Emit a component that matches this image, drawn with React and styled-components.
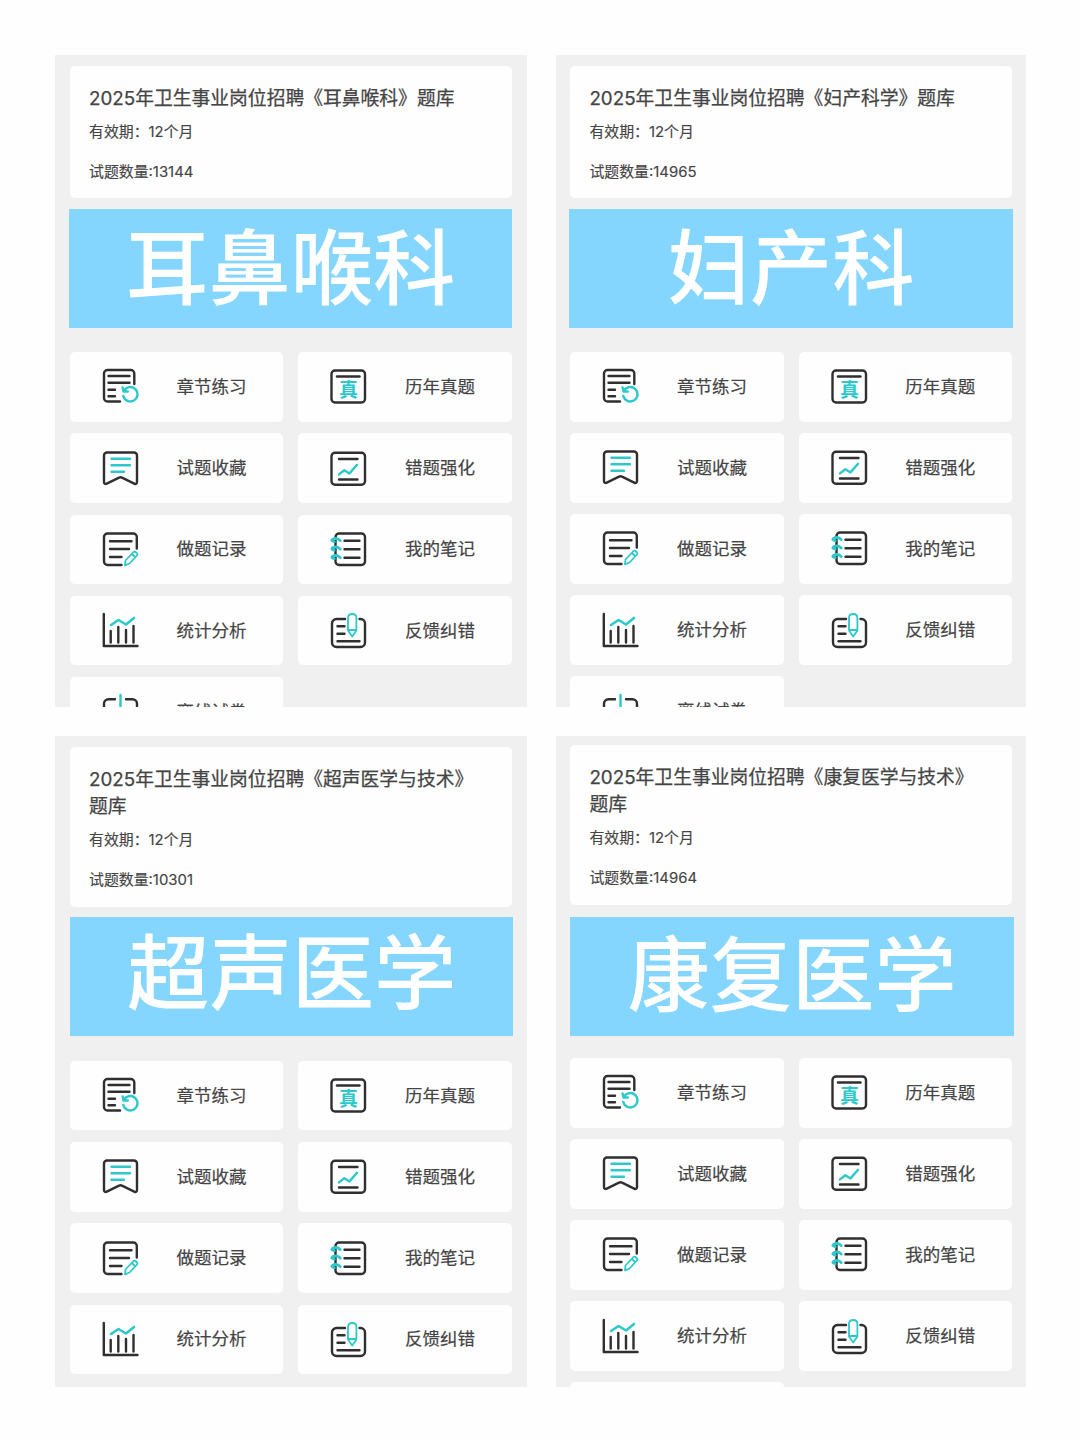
import React from 'react';
import styled, { createGlobalStyle } from 'styled-components';

const colors = {
  page: '#fefefe',
  panel: '#f0f0f0',
  card: '#fefefe',
  banner: '#84d6ff',
  text: '#444444',
  ink: '#2f2f2f',
  teal: '#2cc8cc',
};

const GlobalStyle = createGlobalStyle`
  body {
    margin: 0;
    background-color: ${colors.page};
    font-family: Inter, "Noto Sans CJK SC", sans-serif;
    color: ${colors.text};
  }
`;

const Page = styled.main`
  box-sizing: border-box;
  width: 1080px;
  height: 1440px;
  padding: 55px;
  display: grid;
  grid-template-columns: 472px 470px;
  grid-template-rows: 652px 651px;
  gap: 29px;
  overflow: hidden;
`;

const Panel = styled.section`
  box-sizing: border-box;
  display: flex;
  flex-direction: column;
  min-width: 0;
  overflow: hidden;
  padding: ${({ $top }) => $top}px ${({ $side }) => $side}px 0;
  background-color: ${colors.panel};
`;

const InfoCard = styled.header`
  box-sizing: border-box;
  flex: none;
  height: ${({ $height }) => $height}px;
  padding: 20px 19px 0;
  border-radius: 5px;
  background-color: ${colors.card};
`;

const Title = styled.h1`
  margin: 0;
  width: 396px;
  font-size: 18.8px;
  font-weight: 400;
  line-height: 26.5px;
  -webkit-text-stroke: 0.25px ${colors.text};
`;

const Meta = styled.p`
  margin: ${({ $gap }) => $gap}px 0 0;
  font-size: 14.9px;
  line-height: 20px;
  -webkit-text-stroke: 0.15px ${colors.text};
`;

const Banner = styled.div`
  display: flex;
  flex: none;
  align-items: center;
  justify-content: center;
  box-sizing: border-box;
  width: 443.4px;
  height: 119px;
  margin-top: ${({ $gap }) => $gap}px;
  margin-left: ${({ $shift }) => $shift}px;
  padding-bottom: ${({ $lift }) => $lift}px;
  background-color: ${colors.banner};
  color: #ffffff;
  font-family: "Noto Sans CJK SC", sans-serif;
  font-size: 82.3px;
  font-weight: 500;
  line-height: 1;
  white-space: nowrap;
`;

const Menu = styled.nav`
  display: grid;
  flex: none;
  grid-template-columns: 213.4px 213.4px;
  grid-auto-rows: 69.5px;
  column-gap: 15px;
  row-gap: ${({ $rowGap }) => $rowGap}px;
  margin-top: ${({ $gap }) => $gap}px;
`;

const MenuItem = styled.div`
  display: flex;
  align-items: center;
  padding-left: 32px;
  border-radius: 5px;
  background-color: ${colors.card};
`;

const MenuLabel = styled.span`
  margin-left: 37.5px;
  font-size: 17.5px;
  line-height: 24px;
  -webkit-text-stroke: 0.2px ${colors.text};
`;

const Icon = styled.svg`
  flex: none;
  width: 37px;
  height: 37px;
  fill: none;
  stroke: ${colors.ink};
  stroke-width: 2.4;
  stroke-linecap: round;
  stroke-linejoin: round;
`;

const Accent = styled.g`
  stroke: ${colors.teal};
`;

const Glyph = styled.text`
  fill: ${colors.teal};
  stroke: none;
  font-family: "Noto Sans CJK SC", sans-serif;
  font-size: 19px;
  font-weight: 700;
`;

const icons = {
  chapter: (
    <>
      <path d="M32.3 16V5.500a3.500 3.500 0 0 0-3.500-3.500H5.500A3.500 3.500 0 0 0 2 5.500V30a3.500 3.500 0 0 0 3.500 3.500H18" />
      <path d="M6.500 8H27.500M6.500 14.800H27.500M6.500 21.800H13M6.500 28.200H13" />
      <Accent>
        <path d="M22 22.700A7.200 7.200 0 1 1 21.300 28M20.600 19.500L21.500 23.500L25.800 23.500" />
      </Accent>
    </>
  ),
  past: (
    <>
      <rect x="1.500" y="2.500" width="33.500" height="32" rx="3.500" />
      <path d="M7 8.500H29.500" />
      <Glyph x="8.900" y="28.800">真</Glyph>
    </>
  ),
  favorite: (
    <>
      <path d="M5 2.500H32a3 3 0 0 1 3 3V32c0 1.900-1.200 2.400-2.800 1.600L20 27.700Q18.500 26.800 17 27.700L4.800 33.600C3.200 34.400 2 33.900 2 32V5.500a3 3 0 0 1 3-3Z" />
      <Accent>
        <path d="M9.500 8.800H28M9.500 15.300H28M9.500 21.800H22" />
      </Accent>
    </>
  ),
  mistakes: (
    <>
      <rect x="1.500" y="2.700" width="33.500" height="32" rx="3.500" />
      <path d="M9 9H27.500M9 29.500H27.500" />
      <Accent>
        <path d="M9 24.400L14.300 20.200L19.500 23.400L27 14.800" />
      </Accent>
    </>
  ),
  records: (
    <>
      <path d="M34.800 17.500V6a3.500 3.500 0 0 0-3.500-3.500H5.500A3.500 3.500 0 0 0 2 6V30.500a3.500 3.500 0 0 0 3.500 3.500H19.500" />
      <path d="M8 10.300H29.500M8 18H27M8 26H19.500" />
      <Accent strokeWidth="1.800">
        <path d="M23 34.300L23.500 29.500L31.500 21Q32.500 20.200 33.500 21L35 22.500Q35.800 23.500 35 24.500L27.500 32.500Z M30 23L33 26" />
      </Accent>
    </>
  ),
  notes: (
    <>
      <rect x="5.500" y="2.500" width="29.500" height="31.500" rx="3.500" />
      <path d="M14.500 9.800H29.500M14.500 18.300H29.500M14.500 26.800H29.500" />
      <Accent strokeWidth="2.800">
        <path d="M10.300 9.600Q8.500 7.300 5.500 7.300Q2.600 7.500 1.800 9.500L4.300 10.800" />
        <path d="M10.300 18.100Q8.500 15.800 5.500 15.800Q2.600 16 1.800 18L4.300 19.300" />
        <path d="M10.300 26.600Q8.500 24.300 5.500 24.300Q2.600 24.500 1.800 26.500L4.300 27.800" />
      </Accent>
    </>
  ),
  stats: (
    <>
      <path d="M1.800 2V34H35.500M8.700 19V30.500M16.300 15V30.500M24 18V30.500M31.500 14V30.500" />
      <Accent strokeWidth="2.600">
        <path d="M9 13L16.500 8L24 12.500L32 6" />
      </Accent>
    </>
  ),
  feedback: (
    <>
      <path d="M15 7H6.500A4.500 4.500 0 0 0 2 11.500V30.500a4.500 4.500 0 0 0 4.500 4.500H30.500A4.500 4.500 0 0 0 35 30.500V11.500A4.500 4.500 0 0 0 30.500 7H29.500" />
      <path d="M7.500 14.200H14.500M7.500 21.700H14.500M7.500 29.200H29.500" />
      <Accent strokeWidth="1.800">
        <path d="M18 6Q18 2 22.200 2Q26.400 2 26.400 6V18.500L22.200 24.500L18 18.500ZM18.500 18H26" />
      </Accent>
    </>
  ),
  offline: (
    <>
      <path d="M13 6.200H6.500A4.500 4.500 0 0 0 2 10.700V30a4 4 0 0 0 4 4H31a4 4 0 0 0 4-4V10.700A4.500 4.500 0 0 0 30.500 6.200H24" />
      <Accent>
        <path d="M18.500 2V21M13 16L18.500 21.500L24 16" />
      </Accent>
    </>
  ),
};

const menuEntries = [
  { icon: 'chapter', label: '章节练习' },
  { icon: 'past', label: '历年真题' },
  { icon: 'favorite', label: '试题收藏' },
  { icon: 'mistakes', label: '错题强化' },
  { icon: 'records', label: '做题记录' },
  { icon: 'notes', label: '我的笔记' },
  { icon: 'stats', label: '统计分析' },
  { icon: 'feedback', label: '反馈纠错' },
  { icon: 'offline', label: '离线试卷' },
];

const banks = [
  {
    subject: '耳鼻喉科',
    banner: '耳鼻喉科',
    count: 13144,
    entries: 9,
    top: 10.5,
    side: 15,
    cardHeight: 132,
    bannerGap: 11.5,
    bannerShift: -1,
    bannerLift: 10,
    menuGap: 24,
    rowGap: 11.8,
  },
  {
    subject: '妇产科学',
    banner: '妇产科',
    count: 14965,
    entries: 9,
    top: 10.5,
    side: 14.4,
    cardHeight: 132,
    bannerGap: 11.5,
    bannerShift: -1,
    bannerLift: 10,
    menuGap: 24,
    rowGap: 11.6,
  },
  {
    subject: '超声医学与技术',
    banner: '超声医学',
    count: 10301,
    entries: 8,
    top: 11,
    side: 15,
    cardHeight: 159.5,
    bannerGap: 10.5,
    bannerShift: 0,
    bannerLift: 17,
    menuGap: 24.8,
    rowGap: 11.8,
  },
  {
    subject: '康复医学与技术',
    banner: '康复医学',
    count: 14964,
    entries: 8,
    nextRow: true,
    top: 9,
    side: 14.4,
    cardHeight: 159.5,
    bannerGap: 12,
    bannerShift: 0,
    bannerLift: 12,
    menuGap: 22.5,
    rowGap: 11.6,
  },
];

const QuestionBank = ({ bank }) => (
  <Panel $top={bank.top} $side={bank.side}>
    <InfoCard $height={bank.cardHeight}>
      <Title>{`2025年卫生事业岗位招聘《${bank.subject}》题库`}</Title>
      <Meta $gap={9.5}>有效期：12个月</Meta>
      <Meta $gap={20}>{`试题数量:${bank.count}`}</Meta>
    </InfoCard>
    <Banner $gap={bank.bannerGap} $shift={bank.bannerShift} $lift={bank.bannerLift}>
      {bank.banner}
    </Banner>
    <Menu $gap={bank.menuGap} $rowGap={bank.rowGap}>
      {menuEntries.slice(0, bank.entries).map(({ icon, label }) => (
        <MenuItem key={icon}>
          <Icon viewBox="0 0 37 37">{icons[icon]}</Icon>
          <MenuLabel>{label}</MenuLabel>
        </MenuItem>
      ))}
      {bank.nextRow && <MenuItem />}
    </Menu>
  </Panel>
);

const App = () => (
  <>
    <GlobalStyle />
    <Page>
      {banks.map((bank) => (
        <QuestionBank key={bank.subject} bank={bank} />
      ))}
    </Page>
  </>
);

export default App;
